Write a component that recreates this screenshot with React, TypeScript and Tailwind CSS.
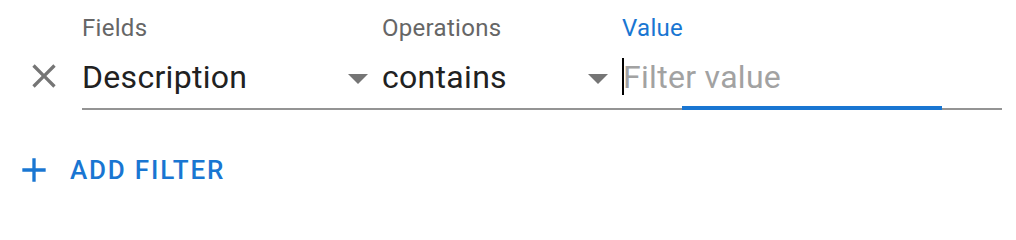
import React from "react";

const CloseIcon = () => (
  <svg viewBox="0 0 24 24" className="w-[40px] h-[40px] fill-[#757575]">
    <path d="M19 6.41 17.59 5 12 10.59 6.41 5 5 6.41 10.59 12 5 17.59 6.41 19 12 13.41 17.59 19 19 17.59 13.41 12z" />
  </svg>
);

const ArrowDropDown = () => (
  <svg viewBox="0 0 24 24" className="absolute right-0 top-[8px] w-[48px] h-[48px] fill-[#757575]">
    <path d="M7 10l5 5 5-5z" />
  </svg>
);

const AddIcon = () => (
  <svg viewBox="0 0 24 24" className="w-[40px] h-[40px] fill-[#1976d2]">
    <path d="M19 13h-6v6h-2v-6H5v-2h6V5h2v6h6v2z" />
  </svg>
);

function SelectField({ label, value, width }: { label: string; value: string; width: string }) {
  return (
    <div className={`${width} flex flex-col`}>
      <div className="h-[32px] text-[24px] leading-[29px] tracking-[0.3px] text-[#666666]">{label}</div>
      <div className="relative h-[64px] border-b-2 border-[#949494]">
        <div className="mt-[8px] pr-[48px] text-[32px] leading-[46px] tracking-[0.3px] text-[#212121]">{value}</div>
        <ArrowDropDown />
      </div>
    </div>
  );
}

export default function App() {
  return (
    <div className="w-[1016px] h-[213px] bg-white overflow-hidden font-['Roboto',sans-serif]">
      <div className="flex items-end pt-[14px] pl-[14px]">
        <div className="w-[60px] h-[60px] mr-[8px] mb-[4px] flex items-center justify-center rounded-full">
          <CloseIcon />
        </div>
        <SelectField label="Fields" value="Description" width="w-[300px]" />
        <SelectField label="Operations" value="contains" width="w-[240px]" />
        <div className="w-[380px] flex flex-col">
          <div className="h-[32px] text-[24px] leading-[29px] tracking-[0.3px] text-[#1976d2]">Value</div>
          <div className="relative h-[64px] border-b-2 border-[#949494]">
            <div className="mt-[8px] pl-[1px] text-[32px] leading-[46px] tracking-[0.3px] text-[#a2a2a2]">Filter value</div>
            <span className="absolute left-0 top-[12px] w-[2px] h-[37px] bg-black" />
            <span className="absolute left-[60px] right-[60px] bottom-[-2px] h-[4px] bg-[#1976d2]" />
          </div>
        </div>
      </div>
      <div className="mt-[37px] pl-[14px] flex items-center h-[46px]">
        <div className="mr-[16px] flex items-center">
          <AddIcon />
        </div>
        <span className="text-[26px] leading-[46px] font-medium tracking-[1.8px] uppercase text-[#1976d2]">
          Add filter
        </span>
      </div>
    </div>
  );
}
